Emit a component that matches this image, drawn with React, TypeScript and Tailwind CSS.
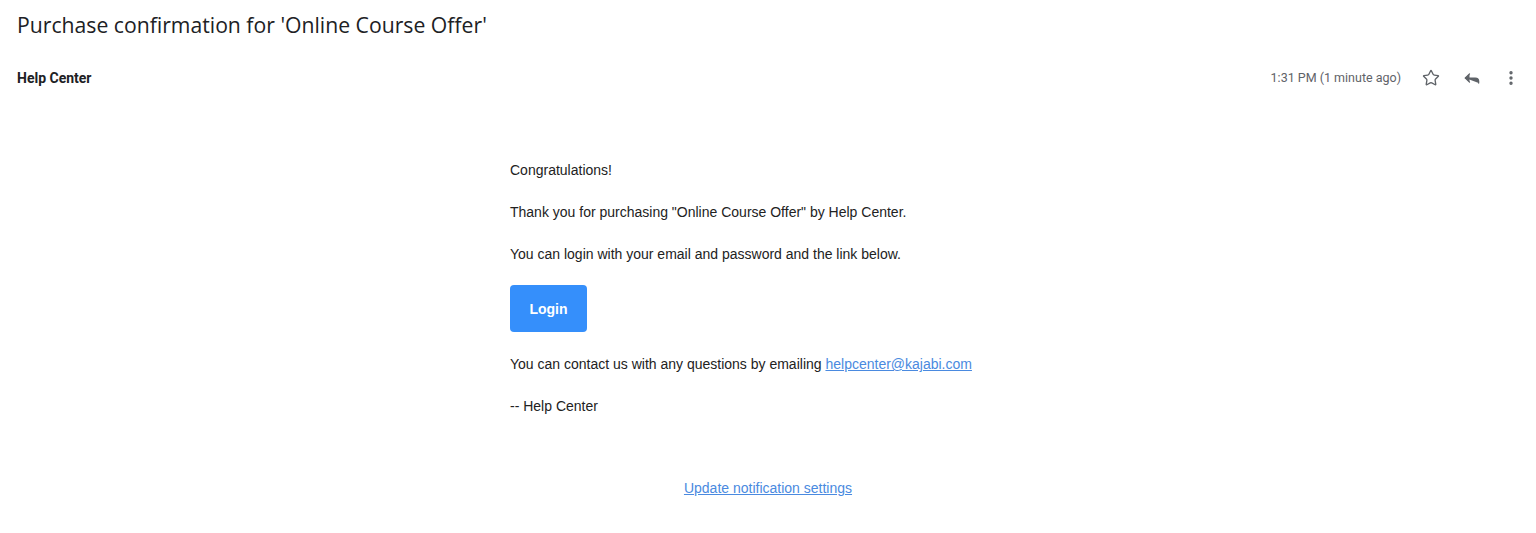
import { Star, Reply, MoreVertical } from 'lucide-react'

export default function App() {
  return (
    <div className="min-h-[533px] w-full bg-white">
      <h1 className="pl-[17px] pt-[10px] text-[21.2px] leading-[30px] text-[#202124] [font-family:'Open_Sans',Roboto,sans-serif]">
        Purchase confirmation for 'Online Course Offer'
      </h1>

      <div className="mt-[23px] flex h-[30px] items-center pl-[17px] pr-[16px] [font-family:Roboto,sans-serif]">
        <span className="text-[14px] font-bold text-[#202124]">Help Center</span>
        <div className="ml-auto flex items-center">
          <span className="mr-[21px] text-[12.5px] text-[#5f6368]">1:31 PM (1 minute ago)</span>
          <Star className="h-[18px] w-[18px] text-[#5f6368]" strokeWidth={1.8} />
          <Reply className="ml-[22px] h-[20px] w-[20px] fill-[#5f6368] text-[#5f6368]" strokeWidth={1.5} />
          <MoreVertical className="ml-[20px] h-[18px] w-[18px] text-[#5f6368]" strokeWidth={2.5} />
        </div>
      </div>

      <div className="mx-auto mt-[67px] w-[516px] text-[14px] leading-[20px] text-[#222] [font-family:'Liberation_Sans',Arial,sans-serif]">
        <p>Congratulations!</p>
        <p className="mt-[22px]">Thank you for purchasing "Online Course Offer" by Help Center.</p>
        <p className="mt-[22px]">You can login with your email and password and the link below.</p>
        <a
          href="#"
          className="mt-[21px] flex h-[47px] w-[77px] items-center justify-center rounded-[4px] bg-[#358ffb] font-bold text-white"
        >
          Login
        </a>
        <p className="mt-[22px]">
          You can contact us with any questions by emailing{' '}
          <a href="#" className="text-[#4a8ae0] underline">
            helpcenter@kajabi.com
          </a>
        </p>
        <p className="mt-[22px]">-- Help Center</p>
      </div>

      <div className="mt-[62px] text-center text-[14px] leading-[20px] [font-family:'Liberation_Sans',Arial,sans-serif]">
        <a href="#" className="text-[#4a8ae0] underline">
          Update notification settings
        </a>
      </div>
    </div>
  )
}
